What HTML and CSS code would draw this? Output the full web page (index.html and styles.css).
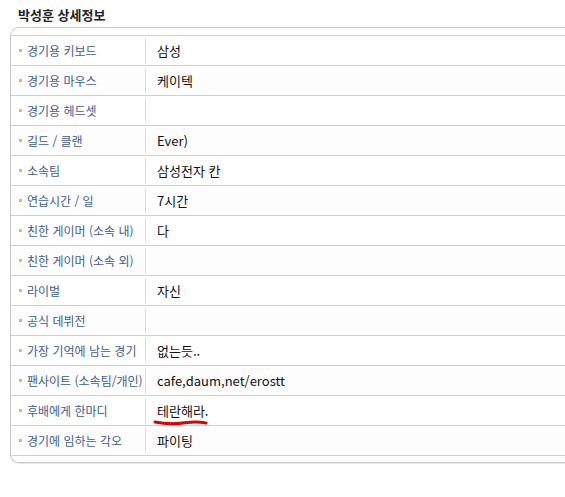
FILE: index.html
```html
<!DOCTYPE html>
<html lang="ko">
<head>
<meta charset="utf-8">
<link rel="stylesheet" href="styles.css">
</head>
<body>
<h1 class="title">박성훈 상세정보</h1>
<div class="box">
  <div class="row"><div class="label">경기용 키보드</div><div class="value">삼성</div></div>
  <div class="row"><div class="label">경기용 마우스</div><div class="value">케이텍</div></div>
  <div class="row"><div class="label">경기용 헤드셋</div><div class="value"></div></div>
  <div class="row"><div class="label">길드 / 클랜</div><div class="value">Ever)</div></div>
  <div class="row"><div class="label">소속팀</div><div class="value">삼성전자 칸</div></div>
  <div class="row"><div class="label">연습시간 / 일</div><div class="value">7시간</div></div>
  <div class="row"><div class="label">친한 게이머 (소속 내)</div><div class="value">다</div></div>
  <div class="row"><div class="label">친한 게이머 (소속 외)</div><div class="value"></div></div>
  <div class="row"><div class="label">라이벌</div><div class="value">자신</div></div>
  <div class="row"><div class="label">공식 데뷔전</div><div class="value"></div></div>
  <div class="row"><div class="label">가장 기억에 남는 경기</div><div class="value">없는듯..</div></div>
  <div class="row"><div class="label">팬사이트 (소속팀/개인)</div><div class="value">cafe,daum,net/erostt</div></div>
  <div class="row"><div class="label">후배에게 한마디</div><div class="value"><span class="marked">테란해라.<svg class="underline" width="56" height="8" viewBox="0 0 56 8"><path d="M2 4 C12 6 24 6 34 4.5 C42 3.5 48 4 53 5" stroke="#e00000" stroke-width="3" fill="none" stroke-linecap="round"/></svg></span></div></div>
  <div class="row"><div class="label">경기에 임하는 각오</div><div class="value">파이팅</div></div>
</div>
</body>
</html>
```

FILE: styles.css
```css
html, body {
  margin: 0;
  padding: 0;
  background: #ffffff;
}
body {
  font-family: "Noto Sans CJK KR", "Noto Sans", sans-serif;
  width: 565px;
  height: 497px;
  overflow: hidden;
}
.title {
  margin: 0;
  padding: 6px 0 0 18px;
  height: 21px;
  font-size: 13px;
  line-height: 17px;
  font-weight: bold;
  color: #222;
}
.box {
  margin-left: 10px;
  width: 554px;
  height: 420px;
  border: 1px solid #c9c9c9;
  border-right: none;
  border-radius: 9px 0 0 9px;
  padding: 7px 0;
  box-shadow: 0 1px 1px #e4e4e4;
}
.row {
  display: flex;
  height: 29px;
  border-top: 1px solid #cfcfcf;
}
.row:last-child {
  border-bottom: 1px solid #cfcfcf;
}
.row:nth-child(even) {
  background: #fdfdfd;
}
.label {
  width: 126px;
  padding-left: 8px;
  display: flex;
  align-items: center;
  gap: 5px;
  font-size: 12px;
  color: #3d5d8f;
  border-right: 1px solid #dcdcdc;
  margin: 2px 0;
}
.label::before {
  content: "";
  width: 3px;
  height: 3px;
  background: #f0b448;
  flex: none;
}
.value {
  padding-left: 11px;
  display: flex;
  align-items: center;
  font-size: 13px;
  color: #111;
}
.marked {
  position: relative;
}
.underline {
  position: absolute;
  left: -4px;
  top: 17px;
}
```
